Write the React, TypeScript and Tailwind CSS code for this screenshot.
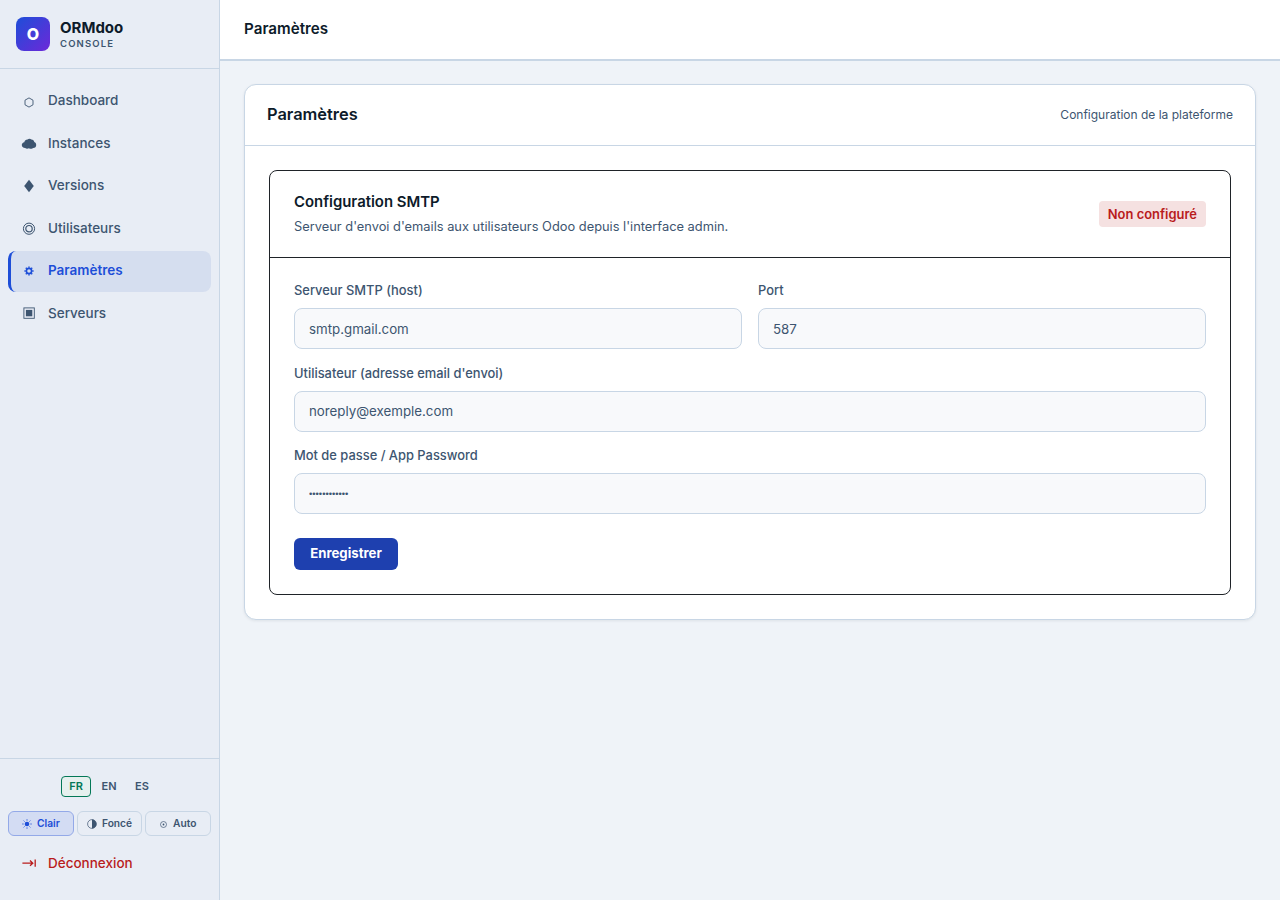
import type { ReactNode } from "react";

const navItems: { name: string; icon: ReactNode; active?: boolean }[] = [
  {
    name: "Dashboard",
    icon: <path d="M8 4.9l4 2.3v4.6l-4 2.3-4-2.3V7.2z" fill="none" stroke="currentColor" strokeWidth="0.9" />,
  },
  {
    name: "Instances",
    icon: (
      <path
        d="M4.2 13c-2.2 0-3.4-1.3-3.4-2.9 0-1.5 1.1-2.6 2.5-2.8C3.7 5.6 5 4.5 6.6 4.6c.7-1 2.9-1.1 3.7-.1 1.6-.1 2.7.9 3 2.5 1.2.3 1.9 1.6 1.9 2.9 0 1.8-1.1 3.1-3 3.1-.8 1-3.3 1-4.2.2-1.1.7-3 .7-3.8-.2z"
        fill="currentColor"
      />
    ),
  },
  { name: "Versions", icon: <path d="M8 1.8l4.8 6.2L8 14.2 3.2 8z" fill="currentColor" /> },
  {
    name: "Utilisateurs",
    icon: (
      <g fill="none" stroke="currentColor">
        <circle cx="8" cy="8.7" r="5.6" strokeWidth="1" />
        <circle cx="8" cy="8.7" r="3.2" strokeWidth="1.2" />
      </g>
    ),
  },
  {
    name: "Paramètres",
    active: true,
    icon: (
      <g fill="none" stroke="currentColor">
        <circle cx="8" cy="8" r="2.6" strokeWidth="1.6" />
        <path
          d="M8 3.4v1.4M8 11.2v1.4M3.4 8h1.4M11.2 8h1.4M4.8 4.8l1 1M10.2 10.2l1 1M4.8 11.2l1-1M10.2 5.8l1-1"
          strokeWidth="1.5"
        />
      </g>
    ),
  },
  {
    name: "Serveurs",
    icon: (
      <g>
        <rect x="2.9" y="2.9" width="10.4" height="10.4" fill="none" stroke="currentColor" strokeWidth="0.9" />
        <rect x="4.9" y="4.9" width="6.4" height="6.4" fill="currentColor" />
      </g>
    ),
  },
];

const labelClass = "block mb-[9px] text-[12.9px] leading-[16px] font-medium text-[#3d5570]";
const inputClass =
  "w-full h-[41px] px-[14px] bg-[#f8f9fb] border border-[#c8d6e5] rounded-lg text-[13.3px] text-[#3d5570] outline-none";

const Field = ({ label, value }: { label: string; value: string }) => (
  <div className="flex-1 min-w-0">
    <label className={labelClass}>{label}</label>
    <input className={inputClass} type="text" defaultValue={value} />
  </div>
);

const Sidebar = () => (
  <aside className="w-[220px] h-full shrink-0 flex flex-col bg-[#e8edf5] border-r border-[#c8d6e5]">
    {/* Logo */}
    <div className="h-[69px] shrink-0 flex items-center gap-[10px] px-4 border-b border-[#c8d6e5]">
      <div className="w-[34px] h-[34px] rounded-lg bg-[linear-gradient(135deg,#1d4ed8,#6d28d9)] flex items-center justify-center text-white font-extrabold text-[16px]">
        O
      </div>
      <div className="flex flex-col">
        <span className="text-[15px] leading-[18px] font-bold text-[#0d1b2a]">ORMdoo</span>
        <span className="text-[9.5px] leading-[12px] mt-[1px] font-semibold tracking-[0.12em] text-[#3d5570]">CONSOLE</span>
      </div>
    </div>

    {/* Nav */}
    <nav className="flex-1 flex flex-col gap-[1.5px] px-2 pt-[11.5px]">
      {navItems.map((item) => (
        <a
          key={item.name}
          href="#"
          className={`h-[41px] pb-[1px] flex items-center gap-[11px] rounded-lg text-[13.5px] ${
            item.active
              ? "pl-[10px] border-l-[3px] border-[#1d4ed8] bg-[#d5deef] text-[#1d4ed8] font-semibold"
              : "pl-[13px] text-[#3d5570] font-medium"
          }`}
        >
          <svg className="w-4 h-4 shrink-0" viewBox="0 0 16 16">
            {item.icon}
          </svg>
          {item.name}
        </a>
      ))}
    </nav>

    {/* Footer */}
    <div className="shrink-0 h-[142px] border-t border-[#c8d6e5] px-2 pt-[17px]">
      <div className="flex justify-center gap-[3px] pr-[1px] text-[11px] font-semibold text-[#3d5570]">
        <button className="w-[30px] h-[21px] rounded border border-[#047857] text-[#047857] bg-[#e6f0ee]">FR</button>
        <button className="w-[30px] h-[21px]">EN</button>
        <button className="w-[30px] h-[21px]">ES</button>
      </div>
      <div className="flex gap-[3px] mt-[14px] text-[10.2px] font-semibold text-[#3d5570]">
        <button className="flex-1 h-[25px] flex items-center justify-center gap-[5px] rounded-md border border-[#93a9e8] bg-[#d3dcf3] text-[#1d4ed8]">
          <svg className="w-[10px] h-[10px]" viewBox="0 0 10 10" fill="none" stroke="currentColor">
            <circle cx="5" cy="5" r="2.3" fill="currentColor" strokeWidth="0" />
            <path
              d="M5 .2v1.5M5 8.3v1.5M.2 5h1.5M8.3 5h1.5M1.6 1.6l1 1M7.4 7.4l1 1M1.6 8.4l1-1M7.4 2.6l1-1"
              strokeWidth="0.8"
            />
          </svg>
          Clair
        </button>
        <button className="flex-1 h-[25px] flex items-center justify-center gap-[5px] rounded-md border border-[#c8d6e5]">
          <svg className="w-[10px] h-[10px]" viewBox="0 0 10 10">
            <circle cx="5" cy="5" r="4.4" fill="none" stroke="currentColor" strokeWidth="0.7" />
            <path d="M5 .6a4.4 4.4 0 010 8.8z" fill="currentColor" />
          </svg>
          Foncé
        </button>
        <button className="flex-1 h-[25px] flex items-center justify-center gap-[6px] rounded-md border border-[#c8d6e5]">
          <svg className="w-[7px] h-[7px] mt-[2px]" viewBox="0 0 7 7">
            <circle cx="3.5" cy="3.5" r="3" fill="none" stroke="currentColor" strokeWidth="0.7" />
            <circle cx="3.5" cy="3.5" r="0.9" fill="currentColor" />
          </svg>
          Auto
        </button>
      </div>
      <a href="#" className="mt-[8px] h-[38px] flex items-center gap-[11px] pl-[13px] text-[13.5px] font-medium text-[#b91c1c]">
        <svg className="w-4 h-[10px] shrink-0" viewBox="0 0 16 10" fill="none" stroke="currentColor" strokeWidth="1.3">
          <path d="M1.4 5.2h10.4M9 2.6l2.8 2.6L9 7.8M14.2 1.6v7.2" />
        </svg>
        Déconnexion
      </a>
    </div>
  </aside>
);

const App = () => (
  <div className="h-[900px] flex overflow-hidden bg-[#eff3f8] font-['Inter',sans-serif]">
    <Sidebar />
    <main className="flex-1 min-w-0 flex flex-col">
      <header className="h-[61px] shrink-0 flex items-center px-6 bg-white border-b-2 border-[#c8d6e5]">
        <h1 className="text-[15.2px] font-semibold text-[#0d1b2a]">Paramètres</h1>
      </header>
      <div className="px-6 pt-[23px]">
        <section className="bg-white border border-[#c8d6e5] rounded-xl shadow-[0_1px_3px_rgba(15,23,42,0.08)]">
          <div className="h-[61px] pb-[2px] flex items-center justify-between px-[22px] border-b border-[#c8d6e5]">
            <h2 className="text-[16.4px] font-semibold text-[#0d1b2a]">Paramètres</h2>
            <span className="mt-[1px] text-[12px] text-[#3d5570]">Configuration de la plateforme</span>
          </div>
          <div className="p-6">
            <div className="border border-[#1f2328] rounded-lg">
              <div className="h-[87px] flex items-center justify-between px-6 border-b border-[#1f2328]">
                <div>
                  <h3 className="text-[14.9px] leading-[18px] font-semibold text-[#0d1b2a]">Configuration SMTP</h3>
                  <p className="mt-2 text-[12.85px] leading-[16px] text-[#3d5570]">
                    Serveur d'envoi d'emails aux utilisateurs Odoo depuis l'interface admin.
                  </p>
                </div>
                <span className="h-[26px] pt-[2px] px-[9px] flex items-center rounded bg-[#f5e1e1] text-[12.95px] font-semibold text-[#b91c1c]">
                  Non configuré
                </span>
              </div>
              <div className="px-6 pt-[25px] pb-6 flex flex-col gap-[16.5px]">
                <div className="flex gap-4">
                  <Field label="Serveur SMTP (host)" value="smtp.gmail.com" />
                  <Field label="Port" value="587" />
                </div>
                <Field label="Utilisateur (adresse email d'envoi)" value="noreply@exemple.com" />
                <div>
                  <label className={labelClass}>Mot de passe / App Password</label>
                  <input
                    className="w-full h-[41px] px-[14px] bg-[#f8f9fb] border border-[#c8d6e5] rounded-lg text-[9.4px] font-['Liberation_Sans',sans-serif] text-[#3d5570] outline-none"
                    type="password"
                    defaultValue="secretsecret"
                  />
                </div>
                <div className="mt-[7.5px]">
                  <button className="h-8 w-[104px] rounded-md bg-[#1e40af] text-white text-[13.2px] font-bold">Enregistrer</button>
                </div>
              </div>
            </div>
          </div>
        </section>
      </div>
    </main>
  </div>
);

export default App;
